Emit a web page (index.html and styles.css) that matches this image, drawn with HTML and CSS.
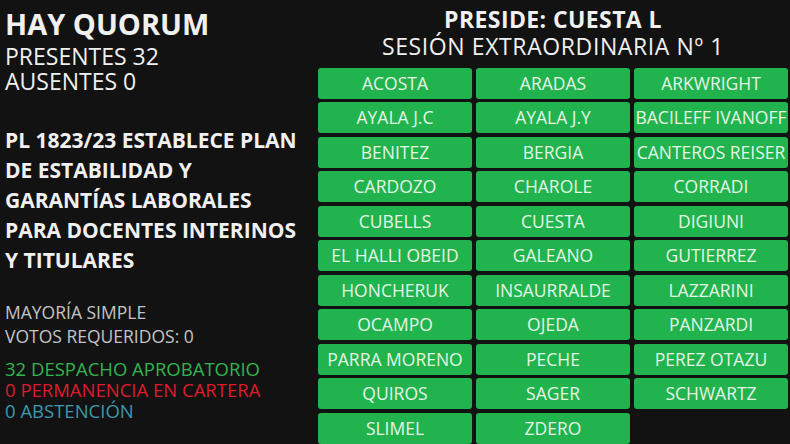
FILE: index.html
```html
<!DOCTYPE html>
<html lang="es">
<head>
<meta charset="utf-8">
<link rel="stylesheet" href="styles.css">
</head>
<body>
<div class="screen">
  <section class="left">
    <div class="quorum">HAY QUORUM</div>
    <div class="count first">PRESENTES 32</div>
    <div class="count">AUSENTES 0</div>
    <div class="bill">PL 1823/23 ESTABLECE PLAN<br>DE ESTABILIDAD Y<br>GARANTÍAS LABORALES<br>PARA DOCENTES INTERINOS<br>Y TITULARES</div>
    <div class="rule first">MAYORÍA SIMPLE</div>
    <div class="rule">VOTOS REQUERIDOS: 0</div>
    <div class="tally green first">32 DESPACHO APROBATORIO</div>
    <div class="tally red">0 PERMANENCIA EN CARTERA</div>
    <div class="tally blue">0 ABSTENCIÓN</div>
  </section>
  <section class="right">
    <div class="preside">PRESIDE: CUESTA L</div>
    <div class="session">SESIÓN EXTRAORDINARIA Nº 1</div>
    <div class="grid">
      <div class="cell">ACOSTA</div>
      <div class="cell">ARADAS</div>
      <div class="cell">ARKWRIGHT</div>
      <div class="cell">AYALA J.C</div>
      <div class="cell">AYALA J.Y</div>
      <div class="cell">BACILEFF IVANOFF</div>
      <div class="cell">BENITEZ</div>
      <div class="cell">BERGIA</div>
      <div class="cell">CANTEROS REISER</div>
      <div class="cell">CARDOZO</div>
      <div class="cell">CHAROLE</div>
      <div class="cell">CORRADI</div>
      <div class="cell">CUBELLS</div>
      <div class="cell">CUESTA</div>
      <div class="cell">DIGIUNI</div>
      <div class="cell">EL HALLI OBEID</div>
      <div class="cell">GALEANO</div>
      <div class="cell">GUTIERREZ</div>
      <div class="cell">HONCHERUK</div>
      <div class="cell">INSAURRALDE</div>
      <div class="cell">LAZZARINI</div>
      <div class="cell">OCAMPO</div>
      <div class="cell">OJEDA</div>
      <div class="cell">PANZARDI</div>
      <div class="cell">PARRA MORENO</div>
      <div class="cell">PECHE</div>
      <div class="cell">PEREZ OTAZU</div>
      <div class="cell">QUIROS</div>
      <div class="cell">SAGER</div>
      <div class="cell">SCHWARTZ</div>
      <div class="cell">SLIMEL</div>
      <div class="cell">ZDERO</div>
    </div>
  </section>
</div>
</body>
</html>
```

FILE: styles.css
```css
* { box-sizing: border-box; }
html, body {
  margin: 0;
  padding: 0;
  background: #121212;
  width: 790px;
  height: 444px;
  overflow: hidden;
}
body {
  font-family: "Open Sans", "Noto Sans", sans-serif;
  color: #f0f0f0;
}
.screen {
  display: flex;
  height: 444px;
}
.left {
  width: 318px;
  padding: 8px 0 0 5px;
  display: flex;
  flex-direction: column;
}
.quorum {
  font-size: 29px;
  font-weight: 700;
  line-height: 32px;
}
.count {
  font-size: 23px;
  line-height: 25px;
}
.count.first { margin-top: 3.6px; }
.bill {
  margin-top: 31.4px;
  font-size: 21px;
  font-weight: 700;
  line-height: 30px;
}
.rule {
  font-size: 17.5px;
  line-height: 24px;
  color: #c4c4c4;
}
.rule.first { margin-top: 25px; }
.tally {
  font-size: 18.5px;
  line-height: 21px;
}
.tally.first { margin-top: 10px; }
.green { color: #33b34f; }
.red { color: #dc1c2c; }
.blue { color: #3d99ad; }
.right {
  width: 470px;
  padding-top: 7px;
  display: flex;
  flex-direction: column;
  align-items: center;
}
.preside {
  font-size: 23px;
  font-weight: 700;
  line-height: 24px;
  letter-spacing: 0.4px;
}
.session {
  margin-top: 2.5px;
  font-size: 23px;
  line-height: 25px;
  letter-spacing: 0.6px;
}
.grid {
  margin-top: 9.4px;
  width: 470px;
  display: grid;
  grid-template-columns: repeat(3, 154px);
  grid-auto-rows: 31px;
  column-gap: 4px;
  row-gap: 3.5px;
}
.cell {
  background: #20b34e;
  border-radius: 3px;
  color: #e4f6e4;
  font-size: 17.5px;
  line-height: 31px;
  text-align: center;
  white-space: nowrap;
  overflow: hidden;
}
```
